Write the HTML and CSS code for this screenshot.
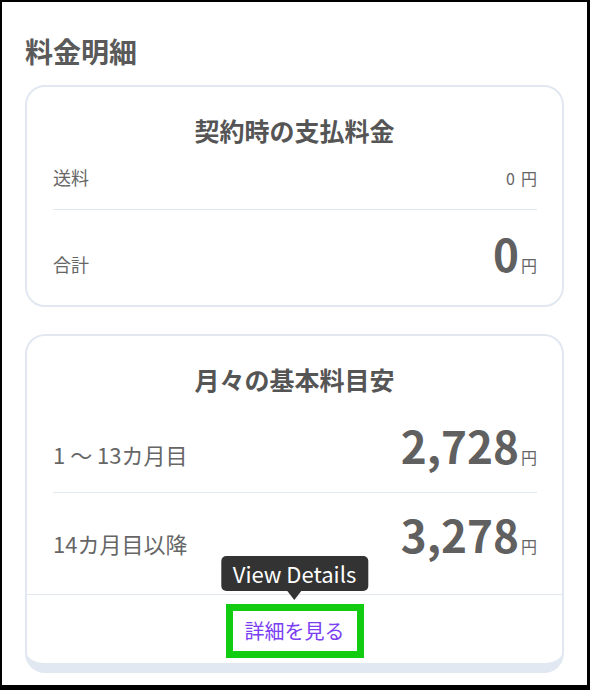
FILE: index.html
```html
<!DOCTYPE html>
<html lang="ja">
<head>
    <meta charset="UTF-8">
    <meta name="viewport" content="width=device-width, initial-scale=1.0">
    <title>料金明細</title>
    <link rel="stylesheet" href="styles.css">
</head>
<body>
    <div class="frame">
        <h2 class="page-title">料金明細</h2>

        <section class="card">
            <h3 class="card-title">契約時の支払料金</h3>
            <div class="card-body">
                <div class="row row-small">
                    <span class="label-small">送料</span>
                    <span class="price-small">0<span class="yen-small">円</span></span>
                </div>
                <div class="row row-total">
                    <span class="label-small">合計</span>
                    <span class="price">0<span class="yen">円</span></span>
                </div>
            </div>
        </section>

        <section class="card card-monthly">
            <h3 class="card-title">月々の基本料目安</h3>
            <div class="card-body">
                <div class="row row-first">
                    <span class="label">1 ～ 13カ月目</span>
                    <span class="price">2,728<span class="yen">円</span></span>
                </div>
                <div class="row row-last">
                    <span class="label">14カ月目以降</span>
                    <span class="price">3,278<span class="yen">円</span></span>
                </div>
            </div>
            <div class="card-footer">
                <a class="details-link" href="#">
                    詳細を見る
                    <span class="tooltip">View Details</span>
                </a>
            </div>
        </section>
    </div>
</body>
</html>
```

FILE: styles.css
```css
* {
    box-sizing: border-box;
}
body {
    margin: 0;
    font-family: "Noto Sans CJK JP", "Noto Sans", sans-serif;
    color: #666;
    background: #fff;
}
.frame {
    width: 590px;
    height: 690px;
    border-style: solid;
    border-color: #000;
    border-width: 2px 3px 5px 2px;
    padding: 29px 23px 0;
    overflow: hidden;
}
.page-title {
    margin: 0 0 14px;
    font-size: 28px;
    line-height: 40px;
    font-weight: 700;
    color: #5a5a5a;
}
.card {
    border: 2px solid #e2e8f1;
    border-radius: 20px;
    background: #fff;
    margin-bottom: 27px;
}
.card-monthly {
    border-bottom-width: 10px;
}
.card-title {
    margin: 0;
    padding-top: 26px;
    font-size: 25px;
    line-height: 34px;
    font-weight: 700;
    text-align: center;
    color: #555;
}
.card-body {
    padding: 0 25px 0 26px;
}
.row {
    display: flex;
    justify-content: space-between;
    align-items: baseline;
    border-bottom: 1px solid #e2e8f1;
}
.row-small {
    padding: 18px 0 19px;
    line-height: 24px;
}
.row-total {
    padding: 15px 0 24px;
    border-bottom: none;
}
.row-first {
    padding: 21px 0 19px;
}
.row-last {
    padding: 13px 0 32px;
    border-bottom: none;
}
.label-small {
    font-size: 18px;
    line-height: 24px;
}
.label {
    font-size: 22px;
    line-height: 30px;
}
.price-small {
    font-size: 16px;
}
.yen-small {
    margin-left: 6px;
}
.price {
    font-size: 44px;
    line-height: 56px;
    font-weight: 700;
    color: #606060;
}
.yen {
    font-size: 16px;
    line-height: 1;
    font-weight: 400;
    margin-left: 2px;
    color: #666;
}
.card-footer {
    border-top: 1px solid #e2e8f1;
    padding: 16px 0 12px;
    text-align: center;
}
.details-link {
    position: relative;
    display: inline-block;
    padding: 6px 12px;
    font-size: 20px;
    line-height: 28px;
    color: #7a40f2;
    text-decoration: none;
    outline: 7px solid #11cc11;
}
.tooltip {
    position: absolute;
    bottom: calc(100% + 20px);
    left: 50%;
    transform: translateX(-50%);
    padding: 0 12px;
    font-size: 22px;
    line-height: 35px;
    color: #fff;
    background: #333;
    border-radius: 5px;
    white-space: nowrap;
}
.tooltip::after {
    content: "";
    position: absolute;
    top: 100%;
    left: 50%;
    margin-left: -7px;
    border: 7px solid transparent;
    border-top: 9px solid #333;
    border-bottom: none;
}
```
